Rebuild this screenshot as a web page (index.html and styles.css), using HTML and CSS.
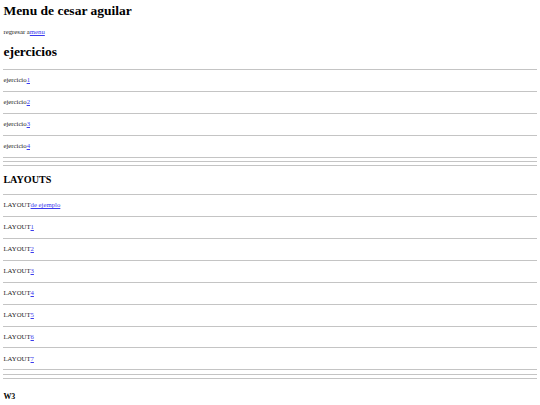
FILE: index.html
```html
<!DOCTYPE html>
<html lang="es">
<head>
  <meta charset="UTF-8">
  <meta name="viewport" content="width=device-width, initial-scale=1.0">
  <title>Menu de cesar aguilar</title>
  <link rel="stylesheet" href="styles.css">
</head>
<body>
  <h1 class="title">Menu de cesar aguilar</h1>
  <p>regresar a<a href="#">menu</a></p>

  <h1>ejercicios</h1>
  <hr>
  <p>ejercicio<a href="#">1</a></p>
  <hr>
  <p>ejercicio<a href="#">2</a></p>
  <hr>
  <p>ejercicio<a href="#">3</a></p>
  <hr>
  <p>ejercicio<a href="#">4</a></p>
  <hr>
  <hr>
  <hr>

  <h2>LAYOUTS</h2>
  <hr>
  <p>LAYOUT<a href="#">de ejemplo</a></p>
  <hr>
  <p>LAYOUT<a href="#">1</a></p>
  <hr>
  <p>LAYOUT<a href="#">2</a></p>
  <hr>
  <p>LAYOUT<a href="#">3</a></p>
  <hr>
  <p>LAYOUT<a href="#">4</a></p>
  <hr>
  <p>LAYOUT<a href="#">5</a></p>
  <hr>
  <p>LAYOUT<a href="#">6</a></p>
  <hr>
  <p>LAYOUT<a href="#">7</a></p>
  <hr>
  <hr>
  <hr>

  <h3>W3</h3>
</body>
</html>
```

FILE: styles.css
```css
body {
  margin: 3.4px;
  font-family: "Liberation Serif", "Times New Roman", serif;
  font-size: 6.75px;
  color: #222;
}

h1 {
  font-size: 13.5px;
  margin: 8.5px 0;
  color: #000;
}

.title {
  margin-top: 0;
}

h2 {
  font-size: 10.1px;
  margin: 8.2px 0;
  color: #000;
}

h3 {
  font-size: 7.9px;
  margin: 12.5px 0 8px;
  color: #000;
}

p {
  margin: 6.6px 0;
  line-height: 7.8px;
}

a {
  color: #3a3aee;
}

hr {
  height: 0;
  border: none;
  border-top: 1px solid #c4c4c4;
  margin: 3.3px 0;
}
```
